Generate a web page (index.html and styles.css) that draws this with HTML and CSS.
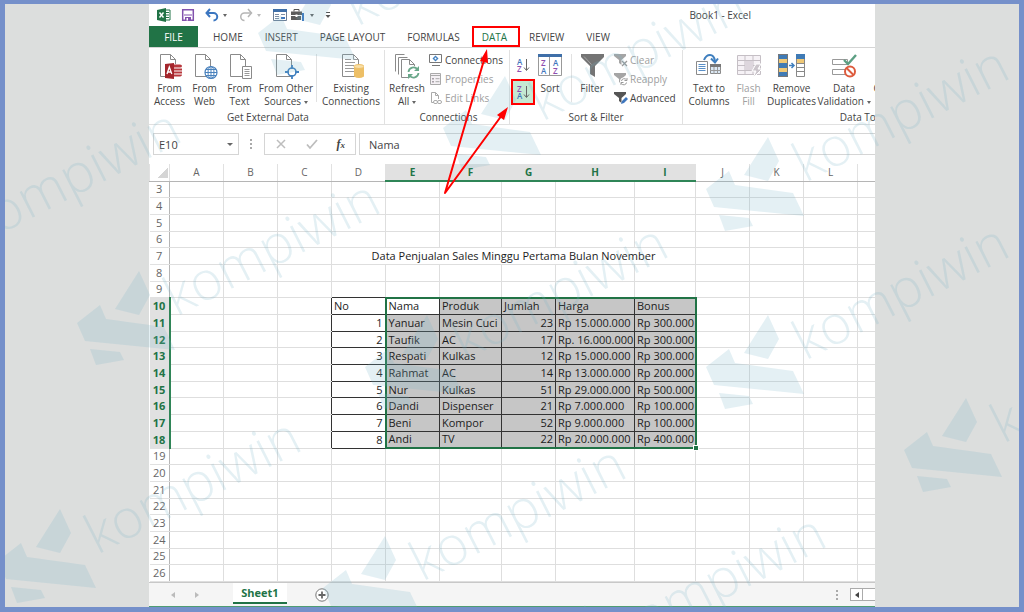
FILE: index.html
```html
<!DOCTYPE html>
<html lang="id">
<head>
    <meta charset="UTF-8">
    <meta name="viewport" content="width=device-width, initial-scale=1.0">
    <title>Book1 - Excel</title>
    <link rel="stylesheet" href="styles.css">
</head>
<body>
    <div class="excel">
        <!-- Quick access toolbar -->
        <header class="title-bar">
            <div class="quick-access">
                <button class="qa-btn" aria-label="Excel">
                    <svg width="14" height="14" viewBox="0 0 14 14"><path d="M8 2h5v10H8z" fill="#fff" stroke="#217346"/><path d="M9 4.500h3M9 7h3M9 9.500h3" stroke="#217346"/><path d="M0 2l9-2v14l-9-2z" fill="#217346"/><path d="M2.500 4.500l4 5M6.500 4.500l-4 5" stroke="#fff" stroke-width="1.400"/></svg>
                </button>
                <button class="qa-btn" aria-label="Save">
                    <svg width="14" height="14" viewBox="0 0 14 14"><path d="M1.700 1.700h10.600v10.600H1.700z" fill="#fff" stroke="#8252ad" stroke-width="1.500"/><path d="M3 6.500h8v1H3zM4 9h6v3.500H4z" fill="#8252ad"/><path d="M5.500 10h1.500v2.500H5.500z" fill="#fff"/></svg>
                </button>
                <button class="qa-btn with-caret" aria-label="Undo">
                    <svg width="14" height="14" viewBox="0 0 14 14"><path d="M2 5h6.500a3.700 3.700 0 0 1 0 7.500" fill="none" stroke="#3b76c0" stroke-width="2"/><path d="M5 1L1.500 5 5 9" fill="none" stroke="#3b76c0" stroke-width="2"/></svg>
                    <i class="caret"></i>
                </button>
                <button class="qa-btn with-caret" aria-label="Redo" disabled>
                    <svg width="14" height="14" viewBox="0 0 14 14"><path d="M12 5H5.500a3.700 3.700 0 0 0 0 7.500" fill="none" stroke="#b5b5b5" stroke-width="1.500"/><path d="M9 1l3.500 4L9 9" fill="none" stroke="#b5b5b5" stroke-width="1.500"/></svg>
                    <i class="caret"></i>
                </button>
                <button class="qa-btn form" aria-label="Form">
                    <svg width="14" height="12" viewBox="0 0 14 12"><path d="M.5.5h13v11H.5z" fill="#fff" stroke="#6d7f96"/><path d="M0 0h14v3H0z" fill="#3f6fa8"/><path d="M2 5.500h4M2 7.500h4M2 9.500h4M8 5.500h4" stroke="#7d8ea5"/><path d="M8 8h4v2H8z" fill="#3f76bd"/></svg>
                </button>
                <button class="qa-btn with-caret" aria-label="Tools">
                    <svg width="15" height="14" viewBox="0 0 15 14"><path d="M3 3.500V1.500h5v2" fill="none" stroke="#555"/><path d="M0 3.500h11v3.500H0zM0 8h10v4H0z" fill="#5b5b5b"/><path d="M4.500 6.500h2v2.500h-2z" fill="#fff"/><path d="M12 5v8" stroke="#3b76c0" stroke-width="2"/></svg>
                    <i class="caret"></i>
                </button>
                <button class="qa-btn" aria-label="Customize Quick Access Toolbar">
                    <svg width="6" height="8" viewBox="0 0 6 8"><path d="M1 1.500h4" stroke="#555"/><path d="M.5 4h5L3 7z" fill="#555"/></svg>
                </button>
            </div>
            <div class="book-title">Book1 - Excel</div>
        </header>

        <nav class="tabs">
            <button class="tab file">FILE</button>
            <button class="tab">HOME</button>
            <button class="tab">INSERT</button>
            <button class="tab">PAGE LAYOUT</button>
            <button class="tab">FORMULAS</button>
            <button class="tab active">DATA</button>
            <button class="tab">REVIEW</button>
            <button class="tab">VIEW</button>
        </nav>

        <!-- Ribbon -->
        <div class="ribbon">
            <section class="group external">
                <div class="tools-row">
                    <button class="big">
                        <svg width="26" height="28" viewBox="0 0 26 28"><path d="M3.500 2.500h10l5 5v17h-15z" fill="#fff" stroke="#8a8a8a"/><path d="M13.500 2.500v5h5" fill="none" stroke="#8a8a8a"/><path d="M15 12h10v13H15z" fill="#fff"/><path d="M16 12.500h7q2 0 2 1.500t-2 1.500h-7zM16 16.500h9v2h-9zM16 19.500h9v2h-9zM16 22.500h9q0 2-3 2h-6z" fill="#b8383d"/><path d="M8 12l9-1v16l-9-1z" fill="#a4262c"/><path d="M10 22l2.300-7 2.500 7M11 20h3" fill="none" stroke="#fff" stroke-width="1.300"/></svg>
                        <span>From<br>Access</span>
                    </button>
                    <button class="big">
                        <svg width="26" height="28" viewBox="0 0 26 28"><path d="M3.500 2.500h10l5 5v17h-15z" fill="#fff" stroke="#8a8a8a"/><path d="M13.500 2.500v5h5" fill="none" stroke="#8a8a8a"/><circle cx="19" cy="20.500" r="6" fill="#fff" stroke="#4a82bd" stroke-width="1.200"/><path d="M13 20.500h12M14 17.500h10M14 23.500h10M19 14.500v12" stroke="#4a82bd"/><ellipse cx="19" cy="20.500" rx="3" ry="6" fill="none" stroke="#4a82bd"/></svg>
                        <span>From<br>Web</span>
                    </button>
                    <button class="big">
                        <svg width="26" height="28" viewBox="0 0 26 28"><path d="M3.500 2.500h10l5 5v17h-15z" fill="#fff" stroke="#8a8a8a"/><path d="M13.500 2.500v5h5" fill="none" stroke="#8a8a8a"/><path d="M15.500 14.500h9v12h-9z" fill="#fff" stroke="#8a8a8a"/><path d="M17.500 17.500h5M17.500 19.500h5M17.500 21.500h5M17.500 23.500h5" stroke="#999"/></svg>
                        <span>From<br>Text</span>
                    </button>
                    <button class="big wide">
                        <svg width="26" height="28" viewBox="0 0 26 28"><path d="M3.500 2.500h10l5 5v17h-15z" fill="#fff" stroke="#8a8a8a"/><path d="M13.500 2.500v5h5" fill="none" stroke="#8a8a8a"/><circle cx="19" cy="20" r="4" fill="#fff" stroke="#3f7fbf" stroke-width="1.600"/><path d="M19 13v4M19 23v4M12 20h4M22 20h4" stroke="#3f7fbf" stroke-width="1.800"/></svg>
                        <span>From Other<br>Sources <i class="caret"></i></span>
                    </button>
                    <i class="divider"></i>
                    <button class="big existing">
                        <svg width="26" height="28" viewBox="0 0 26 28"><path d="M4.500 2.500h11l5 5v17h-16z" fill="#fff" stroke="#8a8a8a"/><path d="M15.500 2.500v5h5M7 7.500h6M7 10.500h10M7 13.500h9M7 16.500h9M7 19.500h9" fill="none" stroke="#9a9a9a"/><path d="M16 14.500v10q5 3 10 0v-10z" fill="#edbf66"/><ellipse cx="21" cy="14.500" rx="5" ry="2" fill="#f8dfa8" stroke="#edbf66"/></svg>
                        <span>Existing<br>Connections</span>
                    </button>
                </div>
                <div class="group-name">Get External Data</div>
            </section>

            <section class="group connections">
                <div class="tools-row">
                    <button class="big refresh">
                        <svg width="28" height="28" viewBox="0 0 28 28"><path d="M2.500 19.500v-17h9" fill="none" stroke="#8a8a8a"/><path d="M5.500 22.500v-17h9" fill="none" stroke="#8a8a8a"/><path d="M8.500 7.500h8l5 5v13h-13z" fill="#fff" stroke="#8a8a8a"/><path d="M16.500 7.500v5h5" fill="none" stroke="#8a8a8a"/><circle cx="20.500" cy="20.500" r="6.500" fill="#fff"/><path d="M15.500 20a5 5 0 0 1 9-2.500M25.500 21a5 5 0 0 1-9 2.500" fill="none" stroke="#6aa88a" stroke-width="1.800"/><path d="M26 14v5h-5zM15 27v-5h5z" fill="#6aa88a"/></svg>
                        <span>Refresh<br>All <i class="caret"></i></span>
                    </button>
                    <div class="stack">
                        <button class="small">
                            <svg width="14" height="14" viewBox="0 0 14 14"><path d="M.5 1.500h12v8H.5z" fill="#fff" stroke="#777"/><path d="M3 12.500h8" stroke="#777"/><path d="M6.500 2.500l3 3-3 3-3-3z" fill="#3f7fbf"/><circle cx="6.500" cy="5.500" r="1" fill="#fff"/></svg>
                            Connections
                        </button>
                        <button class="small" disabled>
                            <svg width="14" height="14" viewBox="0 0 14 14"><path d="M1.500 1.500h10v11h-10zM1.500 3.500h10" fill="#f4f0f4" stroke="#aaa"/><path d="M3 6h2v1.500H3zM3 9h2v1.500H3z" fill="#a8a0a8"/><path d="M6.500 6.700h4M6.500 9.700h4" stroke="#aaa"/></svg>
                            Properties
                        </button>
                        <button class="small" disabled>
                            <svg width="14" height="14" viewBox="0 0 14 14"><path d="M9.500 8V4.500l-3-3h-4v10h3" fill="#fff" stroke="#aaa"/><path d="M6.500 1.500v3h3" fill="none" stroke="#aaa"/><rect x="4.500" y="9.500" width="4" height="3" rx="1.500" fill="#fff" stroke="#aaa"/><rect x="8.500" y="9.500" width="4" height="3" rx="1.500" fill="#fff" stroke="#aaa"/></svg>
                            Edit Links
                        </button>
                    </div>
                </div>
                <div class="group-name">Connections</div>
            </section>

            <section class="group sort-filter">
                <div class="tools-row">
                    <div class="sort-stack">
                        <button class="sort-btn" aria-label="Sort A to Z">
                            <svg width="14" height="16" viewBox="0 0 14 16"><text class="glyph blue" x="1" y="8">A</text><text class="glyph purple" x="1" y="15">Z</text><path d="M10.500 2v11M8 10.500l2.500 3 2.500-3" fill="none" stroke="#666"/></svg>
                        </button>
                        <button class="sort-btn selected" aria-label="Sort Z to A">
                            <svg width="14" height="16" viewBox="0 0 14 16"><text class="glyph purple" x="1" y="8">Z</text><text class="glyph blue" x="1" y="15">A</text><path d="M10.500 2v11M8 10.500l2.500 3 2.500-3" fill="none" stroke="#666"/></svg>
                        </button>
                    </div>
                    <button class="big sort">
                        <svg width="26" height="28" viewBox="0 0 26 28"><path d="M1.500 3.500h23v20h-23z" fill="#fff" stroke="#999"/><path d="M1 2h24v3H1z" fill="#3f6fa8"/><path d="M12.500 5v18.500" stroke="#999"/><text class="glyph purple" x="4" y="14">Z</text><text class="glyph blue" x="4" y="22">A</text><text class="glyph blue" x="16" y="14">A</text><text class="glyph purple" x="16" y="22">Z</text></svg>
                        <span>Sort</span>
                    </button>
                    <i class="divider"></i>
                    <button class="big filter">
                        <svg width="26" height="28" viewBox="0 0 26 28"><path d="M2 2h23v3l-9 9v11l-5-3v-8L2 5z" fill="#747474"/><path d="M5 4.500l7.500 8" stroke="#a5a5a5"/></svg>
                        <span>Filter</span>
                    </button>
                    <div class="stack">
                        <button class="small" disabled>
                            <svg width="14" height="14" viewBox="0 0 14 14"><path d="M0 1h12v2L7.500 7v5L5 10V7L0 3z" fill="#a5a5a5"/><path d="M8 8l5 5M13 8l-5 5" stroke="#999" stroke-width="1.300"/></svg>
                            Clear
                        </button>
                        <button class="small" disabled>
                            <svg width="14" height="14" viewBox="0 0 14 14"><path d="M0 1h12v2L7.500 7v5L5 10V7L0 3z" fill="#a5a5a5"/><circle cx="10" cy="9.500" r="4" fill="#fff"/><path d="M7.500 9a2.700 2.700 0 0 1 5-1M12.500 10.500a2.700 2.700 0 0 1-5 1M13 6v2.500h-2.500M7 13v-2.500h2.500" fill="none" stroke="#999"/></svg>
                            Reapply
                        </button>
                        <button class="small">
                            <svg width="14" height="14" viewBox="0 0 14 14"><path d="M0 1h12v2L7.500 7v5L5 10V7L0 3z" fill="#555"/><path d="M7 13l1-3 4-4 2 2-4 4z" fill="#3f76bd"/></svg>
                            Advanced
                        </button>
                    </div>
                </div>
                <div class="group-name">Sort &amp; Filter</div>
            </section>

            <section class="group data-tools">
                <div class="tools-row">
                    <button class="big columns">
                        <svg width="28" height="28" viewBox="0 0 28 28"><path d="M1.500 9.500h11v13h-11z" fill="#fff" stroke="#8a8a8a"/><path d="M3.500 12.500h7M3.500 14.500h7M3.500 16.500h7M3.500 18.500h7" stroke="#5a90c8"/><path d="M9 8q2-5 6-5t5 6" fill="none" stroke="#3f7fbf" stroke-width="2"/><path d="M16 6.500l4 4 3-4" fill="none" stroke="#3f7fbf" stroke-width="2"/><path d="M15.500 12.500h10v9h-10z" fill="#dce9f5" stroke="#8a8a8a"/><path d="M15 12h11v3H15z" fill="#777"/><path d="M19 15v7M22.500 15v7M15 18.500h11" stroke="#999"/></svg>
                        <span>Text to<br>Columns</span>
                    </button>
                    <button class="big flash" disabled>
                        <svg width="26" height="28" viewBox="0 0 26 28"><path d="M1.500 3.500h23v19h-23z" fill="#f6f2f6" stroke="#c5bfc5"/><path d="M1 8.500h24M1 13.500h24M1 18.500h24M9 3v20M17 3v20" stroke="#c5bfc5"/><path d="M9 9h8v9H9z" fill="#ddd6dd"/><path d="M20 12h5l-3 5h4l-9 9 3-7h-4z" fill="#cbc5cb" stroke="#fff"/></svg>
                        <span>Flash<br>Fill</span>
                    </button>
                    <button class="big duplicates">
                        <svg width="28" height="28" viewBox="0 0 28 28"><path d="M0 2h10v23H0z" fill="#3f7ab5"/><path d="M1 7h8v4H1zM1 16h8v4H1z" fill="#f0c875"/><path d="M.5 2.500h9v22h-9z" fill="none" stroke="#777"/><path d="M11 13.500h5M13.500 11l2.500 2.500-2.500 2.500" fill="none" stroke="#3f7fbf" stroke-width="1.500"/><path d="M18.500 2.500h8v22h-8z" fill="#fff" stroke="#888"/><path d="M18 2h9v5h-9z" fill="#3f7ab5"/><path d="M19 7h7v4h-7z" fill="#f0c875"/><path d="M18 11.500h9M18 15.500h9M18 19.500h9" stroke="#888"/></svg>
                        <span>Remove<br>Duplicates</span>
                    </button>
                    <button class="big validation">
                        <svg width="26" height="28" viewBox="0 0 26 28"><path d="M1.500 7.500h15v5h-15zM1.500 17.500h15v5h-15z" fill="#fff" stroke="#999"/><path d="M13 8l4 4 8-9" fill="none" stroke="#5c9f83" stroke-width="2.400"/><circle cx="19" cy="19.500" r="5" fill="#fff" stroke="#dd5b3d" stroke-width="2"/><path d="M15.500 16l7 7" stroke="#dd5b3d" stroke-width="2"/></svg>
                        <span>Data<br>Validation <i class="caret"></i></span>
                    </button>
                    <button class="big consolidate"><svg width="26" height="28" viewBox="0 0 26 28"></svg><span>Consolidate</span></button>
                </div>
                <div class="group-name">Data Tools</div>
            </section>
        </div>

        <!-- Formula bar -->
        <div class="formula-bar">
            <div class="name-box">
                <input type="text" value="E10" aria-label="Name box">
                <i class="caret"></i>
            </div>
            <span class="grip"></span>
            <div class="fx-buttons">
                <button aria-label="Cancel" disabled><svg width="12" height="12" viewBox="0 0 12 12"><path d="M2 2l8 8M10 2l-8 8" stroke="#bdbdbd" stroke-width="1.500"/></svg></button>
                <button aria-label="Enter" disabled><svg width="12" height="12" viewBox="0 0 12 12"><path d="M1 6.500l3 3.500 7-8" fill="none" stroke="#bdbdbd" stroke-width="1.800"/></svg></button>
                <button class="fx" aria-label="Insert function">f<sub>x</sub></button>
            </div>
            <input class="formula" type="text" value="Nama" aria-label="Formula">
        </div>

        <!-- Worksheet -->
        <main class="sheet">
            <table class="grid">
                <colgroup>
                    <col class="col-head"><col span="5" class="col-std"><col class="col-f"><col class="col-std"><col class="col-h"><col class="col-i"><col span="4" class="col-std">
                </colgroup>
                <thead>
                    <tr>
                        <th class="corner"></th>
                        <th>A</th><th>B</th><th>C</th><th>D</th>
                        <th class="on">E</th><th class="on">F</th><th class="on">G</th><th class="on">H</th><th class="on">I</th>
                        <th>J</th><th>K</th><th>L</th><th></th>
                    </tr>
                </thead>
                <tbody id="rows"></tbody>
            </table>
        </main>

        <footer class="sheet-bar">
            <button class="nav-arrow" aria-label="Previous sheet"><svg width="6" height="8" viewBox="0 0 6 8"><path d="M5 1v6L1 4z" fill="#bbb"/></svg></button>
            <button class="nav-arrow" aria-label="Next sheet"><svg width="6" height="8" viewBox="0 0 6 8"><path d="M1 1v6l4-3z" fill="#bbb"/></svg></button>
            <button class="sheet-tab">Sheet1</button>
            <button class="add-sheet" aria-label="New sheet"><svg width="14" height="14" viewBox="0 0 14 14"><circle cx="7" cy="7" r="6.200" fill="#fff" stroke="#777"/><path d="M7 3.500v7M3.500 7h7" stroke="#666" stroke-width="1.800"/></svg></button>
            <span class="grip end"></span>
            <div class="scrollbar">
                <button aria-label="Scroll left"><svg width="6" height="8" viewBox="0 0 6 8"><path d="M5 1v6L1 4z" fill="#444"/></svg></button>
            </div>
        </footer>
    </div>

    <!-- Watermark -->
    <svg class="overlay" width="1024" height="612" viewBox="0 0 1024 612" aria-hidden="true">
        <defs>
            <g id="mark">
                <path d="M62 0l11 24-11 20-24-6zM23 34l6 14 58 8 11 23-90-9-8-18zM13 78l30 3 4 8-28 5z"/>
                <text class="mark-text" transform="translate(99 46) rotate(-27)">kompiwin</text>
            </g>
        </defs>
        <g class="marks">
            <use href="#mark" x="-122" y="200"/>
            <use href="#mark" x="258" y="-19"/>
            <use href="#mark" x="443" y="76"/>
            <use href="#mark" x="706" y="137"/>
            <use href="#mark" x="77" y="271"/>
            <use href="#mark" x="365" y="315"/>
            <use href="#mark" x="706" y="315"/>
            <use href="#mark" x="904" y="398"/>
            <use href="#mark" x="-2" y="509"/>
            <use href="#mark" x="323" y="536"/>
            <use href="#mark" x="523" y="605"/>
        </g>
    </svg>

    <!-- Red arrows and frames -->
    <svg class="overlay" width="1024" height="612" viewBox="0 0 1024 612" aria-hidden="true">
        <g fill="none" stroke="#f00" stroke-width="2">
            <rect x="473" y="27" width="46" height="19"/>
            <rect x="512" y="80" width="22" height="24"/>
            <path d="M484 60L445 193l57-78" stroke-linejoin="round"/>
        </g>
        <path d="M487 49l1 14-8-2zM508 107l-4 13-7-5z" fill="#f00"/>
    </svg>

    <script src="script.js"></script>
</body>
</html>
```
FILE: styles.css
```css
* {
    margin: 0;
    padding: 0;
    box-sizing: border-box;
}

body {
    position: relative;
    height: 100vh;
    min-height: 612px;
    padding: 0 144px;
    border: 5px solid #7590ca;
    border-top-width: 4px;
    background: #dcdedd;
    font-family: "Open Sans", "Noto Sans", sans-serif;
    font-size: 10px;
    color: #444;
    overflow: hidden;
}

button,
input {
    font: inherit;
    color: inherit;
    border: none;
    background: none;
}

button:disabled {
    color: #a0a0a0;
}

svg {
    display: block;
    flex: none;
}

.excel {
    display: flex;
    flex-direction: column;
    height: 100%;
    background: #fff;
    border-bottom: 1px solid #4f9d73;
    overflow: hidden;
}

.caret {
    display: inline-block;
    border: 2px solid transparent;
    border-top: 3px solid #666;
    border-bottom: none;
    vertical-align: middle;
}

/* Title bar */
.title-bar {
    display: flex;
    align-items: center;
    height: 22px;
    padding-left: 8px;
}

.quick-access {
    display: flex;
    align-items: center;
}

.qa-btn {
    display: flex;
    align-items: center;
    width: 24px;
    height: 20px;
}

.qa-btn.with-caret {
    width: 34px;
    gap: 4px;
}

.qa-btn.form {
    width: 18px;
}

.qa-btn:disabled .caret {
    border-top-color: #bbb;
}

.book-title {
    margin-left: auto;
    margin-right: 124px;
    white-space: nowrap;
}

/* Tabs */
.tabs {
    display: flex;
    height: 22px;
    border-bottom: 1px solid #d5d5d5;
}

.tab {
    padding: 0 11px;
    white-space: nowrap;
}

.tab.file {
    width: 49px;
    margin-right: 4px;
    background: #217346;
    color: #fff;
}

.tab.active {
    color: #217346;
}

/* Ribbon */
.ribbon {
    display: flex;
    height: 77px;
    border-bottom: 1px solid #e1e1e1;
    overflow: hidden;
}

.group {
    display: flex;
    flex-direction: column;
    flex: none;
    margin-top: 2px;
    border-right: 1px solid #e1e1e1;
}

.group.external {
    width: 236px;
    padding-left: 3px;
}

.group.connections {
    width: 125px;
    padding-left: 3px;
}

.group.sort-filter {
    width: 173px;
}

.group.data-tools {
    width: 360px;
    padding-left: 4px;
}

.tools-row {
    display: flex;
    flex: 1;
}

.group-name {
    height: 13px;
    line-height: 12px;
    text-align: center;
}

.divider {
    width: 1px;
    height: 48px;
    margin: 4px 1px 0;
    background: #e1e1e1;
}

.big {
    display: flex;
    flex-direction: column;
    align-items: center;
    flex: none;
    width: 35px;
    height: 60px;
    padding-top: 2px;
    line-height: 13px;
    white-space: nowrap;
}

.big span {
    padding-top: 2px;
}

.big.wide {
    width: 58px;
}

.big.existing {
    width: 66px;
}

.big.refresh {
    width: 38px;
}

.big.sort {
    width: 28px;
    margin-right: 6px;
}

.big.filter {
    width: 38px;
}

.big.columns {
    width: 44px;
}

.big.duplicates {
    width: 51px;
}

.big.validation {
    width: 54px;
}

.big.consolidate {
    width: 60px;
}

.stack {
    display: flex;
    flex-direction: column;
    padding-left: 3px;
}

.small {
    display: flex;
    align-items: center;
    gap: 2px;
    height: 19px;
    white-space: nowrap;
}

.sort-stack {
    display: flex;
    flex-direction: column;
    align-items: center;
    width: 26px;
    padding-top: 3px;
    gap: 4px;
}

.sort-btn {
    display: flex;
    align-items: center;
    justify-content: center;
    width: 22px;
    height: 23px;
}

.sort-btn.selected {
    background: #c5e8d2;
}

.glyph {
    font-size: 8px;
    font-weight: 600;
}

.glyph.blue {
    fill: #3f76bd;
}

.glyph.purple {
    fill: #8e4fb0;
}

/* Formula bar */
.formula-bar {
    display: flex;
    height: 22px;
    margin: 8px 0 9px 4px;
    font-size: 11px;
}

.name-box {
    display: flex;
    align-items: center;
    width: 86px;
    padding: 0 5px;
    border: 1px solid #d5d5d5;
}

.name-box input {
    flex: 1;
    min-width: 0;
}

.name-box .caret {
    border-width: 3px 3px 0;
}

.grip {
    width: 2px;
    height: 10px;
    margin: 6px 12px 0 11px;
    background: repeating-linear-gradient(#aaa 0 2px, transparent 2px 4px);
}

.fx-buttons {
    display: flex;
    align-items: center;
    justify-content: space-between;
    width: 92px;
    margin-right: 3px;
    padding: 0 10px;
    border: 1px solid #d5d5d5;
}

.fx {
    font-family: "Liberation Serif", serif;
    font-size: 12px;
    font-style: italic;
    font-weight: 700;
    line-height: 14px;
}

.fx sub {
    font-size: 9px;
    line-height: 1px;
    vertical-align: baseline;
}

.formula {
    flex: 1;
    min-width: 0;
    padding-left: 9px;
    border: 1px solid #d5d5d5;
    border-right: none;
}

/* Worksheet */
.sheet {
    flex: 1;
    min-height: 0;
    overflow: hidden;
}

.grid {
    width: 762px;
    height: 100%;
    table-layout: fixed;
    border-collapse: collapse;
    font-size: 11px;
    line-height: 14px;
    color: #1c1c1c;
}

.col-head {
    width: 20px;
}

.col-std {
    width: 54px;
}

.col-f {
    width: 62px;
}

.col-h {
    width: 79px;
}

.col-i {
    width: 61px;
}

.grid th {
    font-size: 10px;
    font-weight: 400;
    color: #666;
    border: 1px solid #e1e1e1;
}

.grid thead th {
    height: 17px;
    border-top: none;
    border-bottom: 1px solid #b5b5b5;
}

.grid tbody tr {
    height: 16px;
}

.grid tbody th {
    font-size: 11px;
    border-left: none;
    border-right: 1px solid #b5b5b5;
}

.grid thead .on {
    background: #e1e1e1;
    color: #217346;
    font-weight: 700;
    border-bottom: 2px solid #2f8557;
}

.grid tbody .on {
    background: #e1e1e1;
    color: #217346;
    font-weight: 700;
    border-right: 2px solid #2f8557;
}

.grid .corner {
    background: linear-gradient(135deg, transparent 50%, #d5d5d5 50%) 8px 4px / 10px 10px no-repeat;
}

.grid td {
    padding: 0 2px;
    border: 1px solid #dedede;
    white-space: nowrap;
}

.grid .merged {
    text-align: center;
}

.grid .data {
    border: 1px solid #333;
}

.grid .before-data {
    border-right-color: #333;
}

.grid .above-data {
    border-bottom-color: #333;
}

.grid .picked {
    background: #c6c6c6;
}

.grid .number {
    text-align: right;
}

.grid .edge-left {
    border-left: 2px solid #217346;
}

.grid .edge-right {
    border-right: 2px solid #217346;
}

.grid .edge-top {
    border-top: 2px solid #217346;
}

.grid .edge-bottom {
    border-bottom: 2px solid #217346;
}

.grid .handle {
    position: relative;
}

.grid .handle::after {
    content: "";
    position: absolute;
    right: -3px;
    bottom: -3px;
    width: 4px;
    height: 4px;
    background: #217346;
    outline: 1px solid #fff;
}

/* Sheet tabs */
.sheet-bar {
    display: flex;
    align-items: center;
    height: 24px;
    padding-left: 21px;
    border-top: 1px solid #c8c8c8;
    background: #f5f5f5;
}

.nav-arrow {
    width: 24px;
}

.sheet-tab {
    align-self: flex-start;
    width: 54px;
    height: 21px;
    margin-left: 15px;
    margin-right: 28px;
    border-bottom: 2px solid #217346;
    background: #fff;
    color: #217346;
    font-size: 11px;
    font-weight: 700;
}

.grip.end {
    margin: 0 12px 0 auto;
}

.scrollbar {
    display: flex;
    width: 25px;
    height: 13px;
    border: 1px solid #ababab;
    border-right: none;
    background: #fff;
}

.scrollbar button {
    width: 12px;
    padding-left: 3px;
    border-right: 1px solid #ababab;
}

/* Drawings over the window */
.overlay {
    position: absolute;
    top: -4px;
    left: -5px;
    pointer-events: none;
}

.marks {
    fill: #78b4c8;
    fill-opacity: 0.2;
}

.mark-text {
    font-size: 54px;
    font-weight: 300;
}
```
FILE: script.js
```js
const COLUMNS = 13;
const FIRST_ROW = 3;
const LAST_ROW = 26;
const TITLE_ROW = 7;
const TABLE_ROW = 10;
const TABLE_COL = 3;

const title = "Data Penjualan Sales Minggu Pertama Bulan November";
const sales = [
    ["No", "Nama", "Produk", "Jumlah", "Harga", "Bonus"],
    [1, "Yanuar", "Mesin Cuci", 23, "Rp 15.000.000", "Rp 300.000"],
    [2, "Taufik", "AC", 17, "Rp. 16.000.000", "Rp 300.000"],
    [3, "Respati", "Kulkas", 12, "Rp 15.000.000", "Rp 300.000"],
    [4, "Rahmat", "AC", 14, "Rp 13.000.000", "Rp 200.000"],
    [5, "Nur", "Kulkas", 51, "Rp 29.000.000", "Rp 500.000"],
    [6, "Dandi", "Dispenser", 21, "Rp 7.000.000", "Rp 100.000"],
    [7, "Beni", "Kompor", 52, "Rp 9.000.000", "Rp 100.000"],
    [8, "Andi", "TV", 22, "Rp 20.000.000", "Rp 400.000"]
];

const body = document.getElementById("rows");

for (let r = FIRST_ROW; r <= LAST_ROW; r++) {
    const tr = body.insertRow();
    const head = document.createElement("th");
    const record = sales[r - TABLE_ROW];
    head.textContent = r;
    if (record) head.className = "on";
    tr.appendChild(head);

    for (let c = 0; c < COLUMNS; c++) {
        const td = tr.insertCell();
        if (r === TITLE_ROW && c === TABLE_COL) {
            td.colSpan = 6;
            td.className = "merged";
            td.textContent = title;
            c += 5;
            continue;
        }
        const i = c - TABLE_COL;
        // neighbours share their border with the table
        if (record && i === -1) td.className = "before-data";
        if (r === TABLE_ROW - 1 && i === 0) td.className = "above-data";
        if (!record || i < 0 || i > 5) continue;

        td.textContent = record[i];
        td.classList.add("data");
        if (typeof record[i] === "number") td.classList.add("number");
        if (i === 0) {
            td.classList.add("edge-right");
            continue;
        }
        // E10 is the active cell and stays white
        if (!(r === TABLE_ROW && i === 1)) td.classList.add("picked");
        if (i === 1) td.classList.add("edge-left");
        if (i === 5) td.classList.add("edge-right");
        if (r === TABLE_ROW) td.classList.add("edge-top");
        if (record === sales[sales.length - 1]) {
            td.classList.add("edge-bottom");
            if (i === 5) td.classList.add("handle");
        }
    }
}
```
